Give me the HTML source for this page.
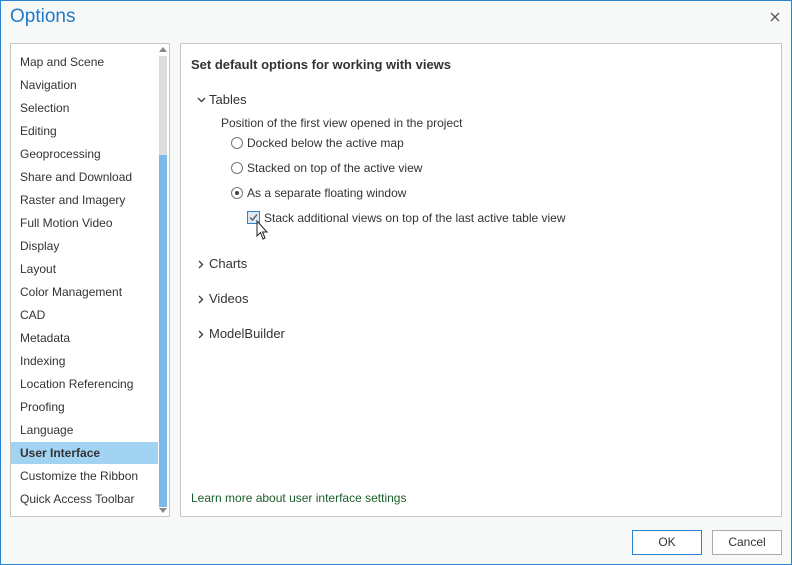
<!DOCTYPE html>
<html><head><style>
*{margin:0;padding:0;box-sizing:border-box}
body{width:792px;height:565px;overflow:hidden;background:#f7f8f8;font-family:"Liberation Sans",sans-serif;font-size:12px;color:#333;position:relative}
.frame{position:absolute;inset:0;border:1px solid #2a84d2}
.title{position:absolute;left:10px;top:6px;font-size:19px;color:#1f7ac7}
.list{position:absolute;left:10px;top:43px;width:160px;height:474px;background:#fff;border:1px solid #c8c8c8}
.item{position:absolute;left:0;width:147px;height:22px;line-height:22px;padding-left:9px;color:#333}
.sel{background:#a3d3f2;font-weight:bold}
.track{position:absolute;left:148px;top:12px;width:8px;height:450px;background:#ddd}
.thumb{position:absolute;left:148px;top:111px;width:8px;height:352px;background:#7bb9e8}
.panel{position:absolute;left:180px;top:43px;width:602px;height:474px;background:#fff;border:1px solid #c8c8c8}
.t{position:absolute;white-space:nowrap}
.radio{position:absolute;width:12px;height:12px;border:1px solid #777;border-radius:50%;background:#fff}
.btn{position:absolute;top:530px;width:70px;height:25px;border:1px solid #2a84d2;background:#fff;text-align:center;line-height:23px;color:#333}
.h{font-size:13px}
</style></head><body>
<div class="frame"></div>
<div class="title">Options</div>
<svg style="position:absolute;left:770px;top:12px" width="10" height="10"><path d="M1 1L9 9M9 1L1 9" stroke="#555" stroke-width="1.3"/></svg>
<div class="list">
<div class="item" style="top:7px">Map and Scene</div>
<div class="item" style="top:30px">Navigation</div>
<div class="item" style="top:53px">Selection</div>
<div class="item" style="top:76px">Editing</div>
<div class="item" style="top:99px">Geoprocessing</div>
<div class="item" style="top:122px">Share and Download</div>
<div class="item" style="top:145px">Raster and Imagery</div>
<div class="item" style="top:168px">Full Motion Video</div>
<div class="item" style="top:191px">Display</div>
<div class="item" style="top:214px">Layout</div>
<div class="item" style="top:237px">Color Management</div>
<div class="item" style="top:260px">CAD</div>
<div class="item" style="top:283px">Metadata</div>
<div class="item" style="top:306px">Indexing</div>
<div class="item" style="top:329px">Location Referencing</div>
<div class="item" style="top:352px">Proofing</div>
<div class="item" style="top:375px">Language</div>
<div class="item sel" style="top:398px">User Interface</div>
<div class="item" style="top:421px">Customize the Ribbon</div>
<div class="item" style="top:444px">Quick Access Toolbar</div>
<div class="track"></div><div class="thumb"></div>
<svg style="position:absolute;left:148px;top:2px" width="8" height="6"><path d="M0 6L4 1L8 6Z" fill="#888"/></svg>
<svg style="position:absolute;left:148px;top:464px" width="8" height="6"><path d="M0 0L4 5L8 0Z" fill="#888"/></svg>
</div>
<div class="panel">
<div class="t" style="left:10px;top:13px;font-size:13px;font-weight:bold;color:#333">Set default options for working with views</div>
<svg style="position:absolute;left:16px;top:53px" width="9" height="6"><path d="M1 1L4.5 4.5L8 1" stroke="#444" stroke-width="1.4" fill="none"/></svg>
<div class="t h" style="left:28px;top:48px">Tables</div>
<div class="t" style="left:40px;top:72px">Position of the first view opened in the project</div>
<div class="radio" style="left:50px;top:93px"></div>
<div class="t" style="left:66px;top:92px">Docked below the active map</div>
<div class="radio" style="left:50px;top:118px"></div>
<div class="t" style="left:66px;top:117px">Stacked on top of the active view</div>
<div class="radio" style="left:50px;top:143px"></div>
<div style="position:absolute;left:54px;top:147px;width:4px;height:4px;border-radius:50%;background:#444"></div>
<div class="t" style="left:66px;top:142px">As a separate floating window</div>
<div style="position:absolute;left:66px;top:167px;width:13px;height:13px;border:1px solid #2a84d2;background:#dce9f5"></div>
<svg style="position:absolute;left:67px;top:168px" width="11" height="11"><path d="M2 5.5L4.5 8L9 2.5" stroke="#666" stroke-width="1.5" fill="none"/></svg>
<div class="t" style="left:83px;top:167px">Stack additional views on top of the last active table view</div>
<svg style="position:absolute;left:75px;top:176px" width="14" height="22"><path d="M1 1 L1 16 L4.5 12.5 L7 19 L9 18 L6.5 12 L11 12 Z" fill="#fff" stroke="#222" stroke-width="1"/></svg>
<svg style="position:absolute;left:17px;top:216px" width="6" height="9"><path d="M1 1L4.5 4.5L1 8" stroke="#444" stroke-width="1.4" fill="none"/></svg>
<div class="t h" style="left:28px;top:212px">Charts</div>
<svg style="position:absolute;left:17px;top:251px" width="6" height="9"><path d="M1 1L4.5 4.5L1 8" stroke="#444" stroke-width="1.4" fill="none"/></svg>
<div class="t h" style="left:28px;top:247px">Videos</div>
<svg style="position:absolute;left:17px;top:286px" width="6" height="9"><path d="M1 1L4.5 4.5L1 8" stroke="#444" stroke-width="1.4" fill="none"/></svg>
<div class="t h" style="left:28px;top:282px">ModelBuilder</div>
<div class="t" style="left:10px;top:447px;color:#1b5e2a">Learn more about user interface settings</div>
</div>
<div class="btn" style="left:632px">OK</div>
<div class="btn" style="left:712px;border-color:#aaa">Cancel</div>
</body></html>
